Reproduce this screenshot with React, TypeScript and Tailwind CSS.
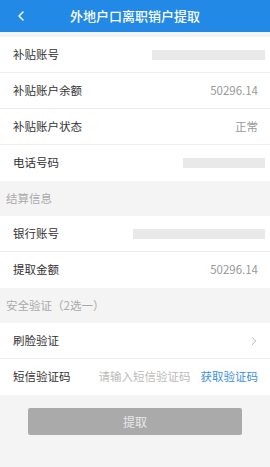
import { ChevronLeft, ChevronRight } from 'lucide-react';

const font = { fontFamily: '"Noto Sans CJK SC", "Noto Sans", sans-serif' };

function Row({ label, children, last }: { label: string; children?: React.ReactNode; last?: boolean }) {
  return (
    <div className={`flex h-[36px] items-center justify-between bg-white pl-[13px] pr-[12px] ${last ? '' : 'border-b border-[#ededed]'}`}>
      <span className="text-[11.5px] text-[#333]">{label}</span>
      {children}
    </div>
  );
}

// blurred-out value in the screenshot
function Blur({ w }: { w: number }) {
  return <div className="-mr-[7px] h-[10px] bg-[#e9e9e9]" style={{ width: w }} />;
}

function Section({ title }: { title: string }) {
  return (
    <div className="flex h-[35px] items-center bg-[#f4f4f4] pl-[6px] text-[11.5px] text-[#aaa]">{title}</div>
  );
}

export default function App() {
  return (
    <div className="flex h-[467px] w-[270px] flex-col bg-[#f4f4f4]" style={font}>
      {/* Header */}
      <div className="relative flex h-[32px] items-center justify-center bg-[#2289e6]">
        <ChevronLeft className="absolute left-[13px] top-[8px] text-white" size={16} strokeWidth={2.2} />
        <span className="text-[13px] font-medium text-white">外地户口离职销户提取</span>
      </div>
      <div className="h-[5px]" />

      <Row label="补贴账号">
        <Blur w={113} />
      </Row>
      <Row label="补贴账户余额">
        <span className="text-[11.5px] text-[#999]">50296.14</span>
      </Row>
      <Row label="补贴账户状态">
        <span className="text-[11.5px] text-[#999]">正常</span>
      </Row>
      <Row label="电话号码" last>
        <Blur w={82} />
      </Row>

      <Section title="结算信息" />
      <Row label="银行账号">
        <Blur w={132} />
      </Row>
      <Row label="提取金额" last>
        <span className="text-[11.5px] text-[#999]">50296.14</span>
      </Row>

      <Section title="安全验证（2选一）" />
      <Row label="刷脸验证">
        <ChevronRight className="-mr-[3px] text-[#aaa]" size={14} strokeWidth={1.5} />
      </Row>
      <Row label="短信验证码" last>
        <div className="flex items-center gap-[10px] text-[11.5px]">
          <span className="text-[#bbb]">请输入短信验证码</span>
          <span className="text-[#3b8fe3]">获取验证码</span>
        </div>
      </Row>

      <div className="px-[28px] pt-[13px]">
        <div className="flex h-[27px] items-center justify-center rounded-[2px] bg-[#aaaaaa] text-[12px] text-[#e8e8e8]">
          提取
        </div>
      </div>
    </div>
  );
}
